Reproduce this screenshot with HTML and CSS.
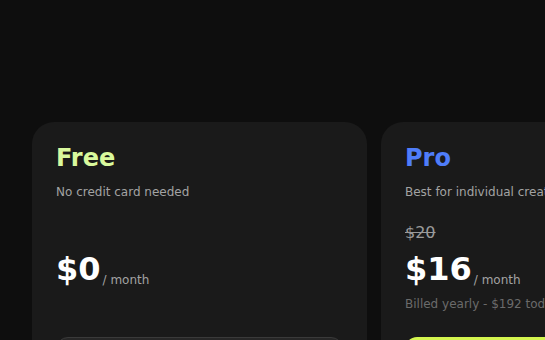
FILE: index.html
```html
<!DOCTYPE html>
<html lang="en">
<head>
    <meta charset="UTF-8">
    <meta name="viewport" content="width=device-width, initial-scale=1.0">
    <title>Pricing</title>
    <link rel="stylesheet" href="styles.css">
</head>
<body>
    <section class="pricing">
        <div class="plans">
            <!-- Free plan -->
            <div class="plan">
                <h3 class="plan-name free">Free</h3>
                <p class="plan-desc">No credit card needed</p>
                <div class="old-price"></div>
                <div class="price-row">
                    <span class="price">$0</span>
                    <span class="per">/ month</span>
                </div>
                <p class="billing"></p>
                <button class="plan-btn btn-dark">Get started</button>
            </div>
            <!-- Pro plan -->
            <div class="plan">
                <h3 class="plan-name pro">Pro</h3>
                <p class="plan-desc">Best for individual creators</p>
                <div class="old-price"><s>$20</s></div>
                <div class="price-row">
                    <span class="price">$16</span>
                    <span class="per">/ month</span>
                </div>
                <p class="billing">Billed yearly - $192 today</p>
                <button class="plan-btn btn-lime">Upgrade to Pro</button>
            </div>
        </div>
    </section>
</body>
</html>
```

FILE: styles.css
```css
body {
    margin: 0;
    padding: 0;
    background-color: #0e0e0e;
    font-family: "DejaVu Sans", sans-serif;
    color: #ffffff;
    overflow: hidden;
}

.pricing {
    padding: 122px 0 0 32px;
}

.plans {
    display: flex;
    gap: 14px;
}

.plan {
    flex: 0 0 335px;
    box-sizing: border-box;
    background-color: #1a1a1a;
    border-radius: 22px;
    padding: 24px;
    height: 300px;
}

.plan-name {
    margin: 0;
    font-size: 24px;
    line-height: 24px;
    font-weight: bold;
}

.free {
    color: #d9f99d;
}

.pro {
    color: #4f7df9;
}

.plan-desc {
    margin: 14px 0 0 0;
    font-size: 12px;
    line-height: 16px;
    color: #a3a3a3;
}

.old-price {
    margin-top: 24px;
    height: 18px;
    font-size: 16px;
    line-height: 18px;
    color: #9a9a9a;
}

.price-row {
    margin-top: 6px;
    display: flex;
    align-items: flex-end;
    gap: 2px;
}

.price {
    font-size: 32px;
    font-weight: bold;
    line-height: 42px;
}

.per {
    font-size: 12px;
    line-height: 16px;
    padding-bottom: 2px;
    color: #a3a3a3;
}

.billing {
    margin: 6px 0 0 0;
    height: 16px;
    font-size: 12px;
    line-height: 16px;
    color: #6b6b6b;
}

.plan-btn {
    display: block;
    width: 100%;
    margin-top: 25px;
    height: 40px;
    border-radius: 12px;
    font-family: "DejaVu Sans", sans-serif;
    font-size: 14px;
    font-weight: bold;
}

.btn-dark {
    background-color: #262626;
    border: 1px solid #3a3a3a;
    color: #ffffff;
}

.btn-lime {
    background-color: #d4f54f;
    border: none;
    color: #111111;
}
```
